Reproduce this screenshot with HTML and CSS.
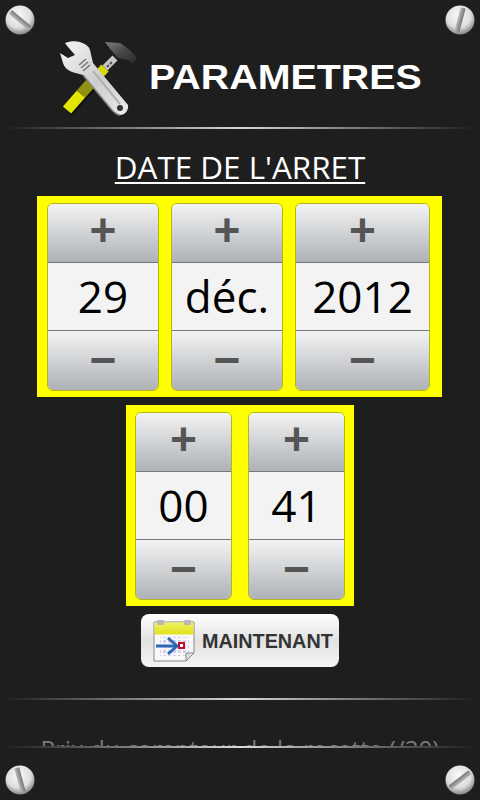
FILE: index.html
```html
<!DOCTYPE html>
<html lang="fr">
<head>
<meta charset="utf-8">
<title>Paramètres</title>
<link rel="stylesheet" href="styles.css">
</head>
<body>
<div class="screen">
  <svg class="screw screw-tl" viewBox="0 0 30 30"><defs><radialGradient id="sg" cx="45%" cy="35%" r="70%"><stop offset="0" stop-color="#fafafa"/><stop offset=".6" stop-color="#dedede"/><stop offset="1" stop-color="#707070"/></radialGradient><linearGradient id="sl" x1="0" y1="0" x2="0" y2="1"><stop offset="0" stop-color="#777"/><stop offset="1" stop-color="#bbb"/></linearGradient></defs><circle cx="15" cy="15" r="14.5" fill="url(#sg)"/><rect x="2.5" y="12.5" width="25" height="5" rx="1" fill="url(#sl)" transform="rotate(40 15 15)"/></svg>
  <svg class="screw screw-tr" viewBox="0 0 30 30"><circle cx="15" cy="15" r="14.5" fill="url(#sg)"/><rect x="2.5" y="12.5" width="25" height="5" rx="1" fill="url(#sl)" transform="rotate(105 15 15)"/></svg>
  <svg class="screw screw-bl" viewBox="0 0 30 30"><circle cx="15" cy="15" r="14.5" fill="url(#sg)"/><rect x="2.5" y="12.5" width="25" height="5" rx="1" fill="url(#sl)" transform="rotate(75 15 15)"/></svg>
  <svg class="screw screw-br" viewBox="0 0 30 30"><circle cx="15" cy="15" r="14.5" fill="url(#sg)"/><rect x="2.5" y="12.5" width="25" height="5" rx="1" fill="url(#sl)" transform="rotate(-38 15 15)"/></svg>

  <header class="header">
    <svg class="tools" viewBox="0 0 80 78">
      <defs>
        <linearGradient id="wr" x1="0" y1="0" x2="1" y2="1"><stop offset="0" stop-color="#f6f6f6"/><stop offset=".55" stop-color="#cdcdcd"/><stop offset="1" stop-color="#ececec"/></linearGradient>
        <linearGradient id="hm" x1="0" y1="0" x2="1" y2="1"><stop offset="0" stop-color="#808080"/><stop offset=".5" stop-color="#474747"/><stop offset="1" stop-color="#2a2a2a"/></linearGradient>
      </defs>
      <path d="M9 71 L44 33" stroke="#000" stroke-opacity=".45" stroke-width="13" fill="none"/>
      <path d="M9 70 L23 54" stroke="#e2e600" stroke-width="11" fill="none"/>
      <path d="M23 54 L32 44" stroke="#8f9210" stroke-width="11" fill="none"/>
      <path d="M32 44 L47 28" stroke="#d6da00" stroke-width="10" fill="none"/>
      <path d="M47 28 L57 18" stroke="#c8c8c8" stroke-width="7" fill="none"/>
      <path d="M49 27 L51 25 M52 24 L54 22" stroke="#555" stroke-width="2" fill="none"/>
      <path d="M47 2 L62 3 Q72 9 79 18 L75 23 L69 20 L60 18 L53 10 Z" fill="url(#hm)"/>
      <path d="M7 3 C12 1 18 1 22 2 C27 4 31 6 32 10 L35 23 L70 65 C71 70 67 75 62 75 C59 75 56 72 54 70 L25 35 L14 32 C9 30 6 27 5 23 L2 13 L10 18 L17 15 L10 7 Z" fill="url(#wr)"/>
      <path d="M21 25 L28 19 M23 28 L30 22 M25 31 L32 25" stroke="#777" stroke-width="1.6"/>
      <path d="M35 31 L62 64" stroke="#b0b0b0" stroke-width="2" fill="none"/>
      <path d="M25 35 L54 70 C56 72 59 75 62 75" stroke="#8a8a8a" stroke-width="1.5" fill="none"/>
      <circle cx="62" cy="68" r="3" fill="#333"/>
    </svg>
    <h1 class="app-title">PARAMETRES</h1>
  </header>
  <div class="rule"></div>

  <main class="content">
    <h2 class="section-title">DATE DE L'ARRET</h2>
    <div class="yellow-box date-box">
      <div class="picker picker-day"><div class="step">+</div><div class="value">29</div><div class="step step-minus">−</div></div>
      <div class="picker picker-day"><div class="step">+</div><div class="value">déc.</div><div class="step step-minus">−</div></div>
      <div class="picker picker-year"><div class="step">+</div><div class="value">2012</div><div class="step step-minus">−</div></div>
    </div>
    <div class="yellow-box time-box">
      <div class="picker picker-time"><div class="step">+</div><div class="value">00</div><div class="step step-minus">−</div></div>
      <div class="picker picker-time"><div class="step">+</div><div class="value">41</div><div class="step step-minus">−</div></div>
    </div>
    <button class="now-btn" type="button">
      <svg class="cal" viewBox="0 0 42 42">
        <defs>
          <pattern id="dots" width="5" height="5" patternUnits="userSpaceOnUse"><rect x="0" y="0" width="3" height="3" fill="#d8cdf0"/></pattern>
          <linearGradient id="caly" x1="0" y1="0" x2="0" y2="1"><stop offset="0" stop-color="#f0f060"/><stop offset="1" stop-color="#e2e21c"/></linearGradient>
        </defs>
        <path d="M1 2 H41 V33 L33 41 H1 Z" fill="#f8f8f8" stroke="#8a8a8a"/>
        <rect x="1.5" y="2.5" width="39" height="12" fill="url(#caly)"/>
        <rect x="4" y="0" width="7" height="5" rx="1" fill="#b8b8b8"/>
        <rect x="31" y="0" width="7" height="5" rx="1" fill="#b8b8b8"/>
        <rect x="7" y="17" width="29" height="19" fill="url(#dots)"/>
        <path d="M3 26 H23" stroke="#2a68b8" stroke-width="3"/>
        <path d="M15 18 L24 26 L15 34" stroke="#2a68b8" stroke-width="3" fill="none"/>
        <rect x="26" y="23" width="5" height="5" fill="#fff" stroke="#c01030" stroke-width="2"/>
        <path d="M33 41 V33 H41 Z" fill="#ddd" stroke="#8a8a8a"/>
      </svg>
      <span class="now-label">MAINTENANT</span>
    </button>
    <div class="rule rule-inner"></div>
    <p class="next-label">Prix du compteur de la recette (/20)</p>
  </main>
  <div class="rule"></div>
  <footer class="footer"></footer>
</div>
</body>
</html>
```

FILE: styles.css
```css
html, body { margin: 0; padding: 0; background: #1e1e1e; }
.screen {
  position: relative;
  width: 480px;
  height: 800px;
  overflow: hidden;
  background: #1e1e1e;
  display: flex;
  flex-direction: column;
  font-family: "Open Sans", sans-serif;
}
.screw { position: absolute; width: 30px; height: 30px; }
.screw-tl { left: 5px; top: 5px; }
.screw-tr { left: 445px; top: 5px; }
.screw-bl { left: 5px; top: 765px; }
.screw-br { left: 445px; top: 765px; }

.header {
  height: 127px;
  flex: none;
  display: flex;
  align-items: flex-start;
  padding-left: 58px;
  box-sizing: border-box;
}
.tools { width: 80px; height: 78px; margin-top: 40px; flex: none; }
.app-title {
  margin: 54px 0 0 11px;
  font: bold 35px/46px "Liberation Sans", sans-serif;
  color: #fff;
  white-space: nowrap;
  transform: scaleX(1.125);
  transform-origin: left center;
}
.rule {
  height: 2px;
  flex: none;
  background: linear-gradient(90deg, rgba(220,220,220,0) 1%, #777 25%, #d8d8d8 50%, #777 75%, rgba(220,220,220,0) 99%);
}
.content {
  flex: none;
  height: 617px;
  overflow: hidden;
  display: flex;
  flex-direction: column;
  align-items: center;
}
.section-title {
  margin: 17px 0 0;
  height: 50px;
  font: 400 31.4px/42px "Open Sans", sans-serif;
  color: #fff;
  text-decoration: underline;
  text-decoration-thickness: 2px;
  text-underline-offset: 3px;
  flex: none;
}
.yellow-box {
  flex: none;
  display: flex;
  gap: 12px;
  background: #ffff00;
  padding: 7px 11px 6px 10px;
  box-sizing: border-box;
  height: 201px;
}
.date-box { width: 405px; margin-left: -1px; }
.time-box { width: 228px; margin-top: 8px; padding-left: 9px; gap: 16px; }
.picker {
  display: grid;
  grid-template-rows: 58px 69px 59px;
  border: 1px solid #b4b41e;
  border-radius: 6px;
  overflow: hidden;
  box-sizing: border-box;
  flex: none;
}
.picker-day { width: 112px; }
.picker-year { width: 135px; }
.picker-time { width: 97px; }
.step {
  background: linear-gradient(#f2f3f4, #aeb2b6);
  color: #555;
  font: bold 46px/52px "Liberation Sans", sans-serif;
  text-align: center;
}
.step-minus { line-height: 58px; }
.value {
  background: #f3f3f3;
  color: #000;
  border-top: 1px solid #777;
  border-bottom: 1px solid #777;
  font: 400 44px/66px "Open Sans", sans-serif;
  text-align: center;
  box-sizing: border-box;
}
.now-btn {
  flex: none;
  width: 198px;
  height: 53px;
  margin-top: 8px;
  padding: 0 0 0 12px;
  border: 0;
  border-radius: 8px;
  background: linear-gradient(#ffffff, #e2e2e2 50%, #f4f4f4);
  display: flex;
  align-items: center;
  gap: 8px;
}
.cal { width: 42px; height: 42px; flex: none; }
.now-label {
  font: bold 19.8px/24px "Liberation Sans", sans-serif;
  color: #333;
  white-space: nowrap;
  margin-left: -1px;
}
.rule-inner { width: 100%; margin-top: 31px; }
.next-label {
  flex: none;
  margin: 33px 0 0;
  font: 400 24.2px/32px "Open Sans", sans-serif;
  color: #7a7a7a;
  white-space: nowrap;
}
.footer { flex: 1; }
```
